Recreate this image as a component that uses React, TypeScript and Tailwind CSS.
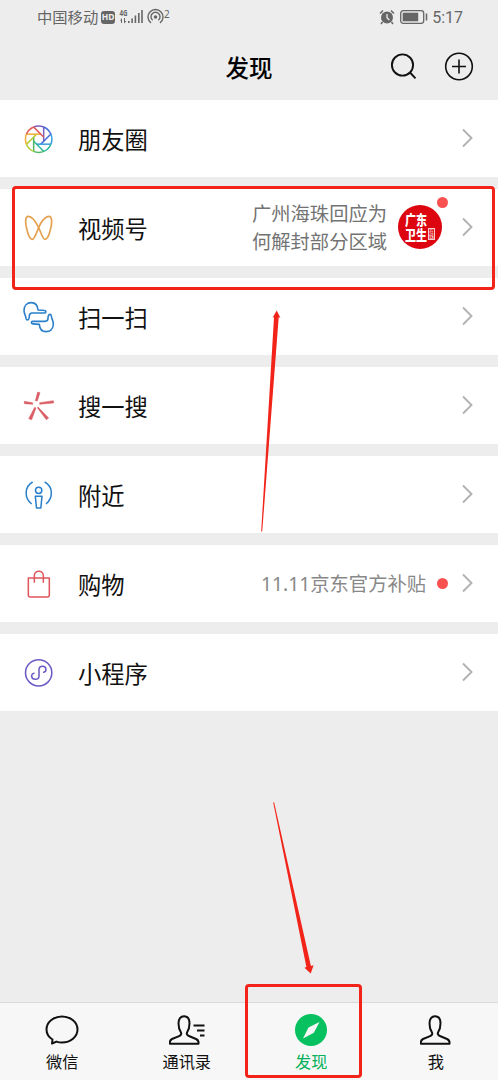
import type { ReactNode } from "react";

const APERTURE = ["#7a5fc0", "#4a6fd6", "#3a9fe0", "#2db8a0", "#4fb860", "#b5cc3a", "#eeb03a", "#e25c5c"];

function MomentsIcon() {
  return (
    <svg viewBox="0 0 108 108" className="size-9" fill="none" strokeWidth="4.600">
      {APERTURE.map((color, i) => (
        <g key={color} transform={`translate(53 54.500) rotate(${i * 45})`} stroke={color}>
          <path d="M-15.300 -36.600A39.600 39.600 0 0 1 15.300 -36.600" />
          <path d="M15 -37V7" />
        </g>
      ))}
    </svg>
  );
}

function ChannelsIcon() {
  return (
    <svg viewBox="0 0 108 108" className="size-9" fill="none" stroke="#e5a04f" strokeWidth="5" strokeLinejoin="round">
      <path d="M53 53C45 36 33 19 22 19C11 19 13 43 18 60C22 76 28 88 34 88C41 88 47 66 53 53C59 36 73 19 84 19C95 19 93 43 88 60C84 76 78 88 72 88C65 88 61 70 53 53Z" />
    </svg>
  );
}

function ScanIcon() {
  const hand = "M9 34C9 20 18 11 31 11C43 11 50 20 51 33L71 34.500a3.700 3.700 0 0 1 0 7.500L34 42C27 42 25 45 25 51C25 58 22 63 18 63C15 63 15 58 14 53C12 47 9 42 9 34Z";
  return (
    <svg viewBox="0 0 108 108" className="size-9" fill="none" stroke="#2b80cc" strokeWidth="4.800" strokeLinejoin="round">
      <path d={hand} />
      <path d={hand} transform="rotate(180 53 54.500)" />
    </svg>
  );
}

function SearchSparkIcon() {
  return (
    <svg viewBox="0 0 108 108" className="size-9" fill="#da5c64" stroke="#da5c64" strokeWidth="1.500" strokeLinejoin="round">
      <path d="M50 12L57 14L49 39L43 38Z" />
      <path d="M56 44L97 38L98 45L56 49Z" />
      <path d="M10 40L35 44.500L35 49L10 47Z" />
      <path d="M41 58L45 60L32 95L23 92Z" />
      <path d="M51 57L83 90L76 95L49 59Z" />
    </svg>
  );
}

function NearbyIcon() {
  return (
    <svg viewBox="0 0 108 108" className="size-9" fill="none" stroke="#2b80cc" strokeWidth="4.600" strokeLinejoin="round">
      <circle cx="53" cy="40" r="9.500" />
      <path d="M43 58H63L59.500 93H46.500Z" />
      <path d="M35 15C10 29 9 63 32 81M71 15C97 29 97 63 75 81" />
    </svg>
  );
}

function ShoppingIcon() {
  return (
    <svg viewBox="0 0 108 108" className="size-9" fill="none" stroke="#e0575f" strokeWidth="4.600">
      <path d="M22 36H85V87Q85 93 79 93H28Q22 93 22 87Z" strokeLinejoin="round" />
      <path d="M40 50V29C40 11 67 11 67 29V50" />
    </svg>
  );
}

function MiniProgramIcon() {
  return (
    <svg viewBox="0 0 108 108" className="size-9" fill="none" stroke="#6a5cc4" strokeWidth="4.600" strokeLinecap="round">
      <circle cx="53" cy="53.500" r="39.500" />
      <path d="M68 52C78 50 77 34 65 34C58 34 54 38 54 44V63C54 69 49 73 43 73C29 73 29 56 39 55" />
    </svg>
  );
}

function Dot() {
  return <span className="size-[11px] rounded-full bg-[#fa5151]" />;
}

function Chevron() {
  return (
    <svg viewBox="0 0 12 20" className="mb-px h-5 w-3" fill="none" stroke="#b2b2b2" strokeWidth="1.900">
      <path d="M2 1.500L10.500 10L2 18.500" />
    </svg>
  );
}

function ChannelsExtra() {
  return (
    <div className="mr-px flex items-center gap-[11px]">
      <p className="text-[19.3px] leading-7 text-[#737373]">
        广州海珠回应为
        <br />
        何解封部分区域
      </p>
      <div className="relative mb-px flex size-11 items-center justify-center gap-px rounded-full bg-[#dc0510] text-white">
        <div className="scale-y-125 text-[11px] font-black leading-[12px]">
          广东
          <br />
          卫生
        </div>
        <div className="mt-3.5 w-[7px] border border-white/80 text-center text-[5px] leading-[5px]">在线</div>
        <span className="absolute -right-[6px] -top-[8px] size-[11px] rounded-full bg-[#fa5151]" />
      </div>
    </div>
  );
}

const ROWS: { label: string; icon: ReactNode; extra?: ReactNode }[] = [
  { label: "朋友圈", icon: <MomentsIcon /> },
  { label: "视频号", icon: <ChannelsIcon />, extra: <ChannelsExtra /> },
  { label: "扫一扫", icon: <ScanIcon /> },
  { label: "搜一搜", icon: <SearchSparkIcon /> },
  { label: "附近", icon: <NearbyIcon /> },
  {
    label: "购物",
    icon: <ShoppingIcon />,
    extra: (
      <div className="-mr-[5px] flex items-center gap-[11px]">
        <span className="pt-0.5 text-[19.3px] text-[#888888]">11.11京东官方补贴</span>
        <Dot />
      </div>
    ),
  },
  { label: "小程序", icon: <MiniProgramIcon /> },
];

function StatusBar() {
  return (
    <div className="flex h-[34px] items-center justify-between pl-[37px] pr-[35px] text-[#666666]">
      <div className="flex items-center">
        <span className="w-[63px] whitespace-nowrap text-[15.3px]">中国移动</span>
        <span className="ml-px flex h-[13px] w-[14px] items-center justify-center rounded-[3px] bg-[#666666] text-[8.500px] font-bold text-[#ededed]">
          HD
        </span>
        <svg viewBox="0 0 24 18" className="ml-1 h-[18px] w-6" fill="currentColor">
          <text x="0.500" y="7.500" fontSize="8" fontWeight="700" textLength="8" lengthAdjust="spacingAndGlyphs">
            4G
          </text>
          <path d="M1 12.500L3 10V15H2V12.500ZM5 10H6V13H7.500L5 15.500ZM9 13h1.600v2H9zM12.300 10.500h1.600v4.500h-1.600zM15.600 7.500h1.600V15h-1.600zM19 5h1.600v10H19zM22.200 2h1.600v13h-1.600z" />
        </svg>
        <svg viewBox="0 0 17 18" className="ml-1 h-[18px] w-[17px]" fill="none" stroke="currentColor" strokeWidth="1.400">
          <path d="M4 15A7.500 7.500 0 1 1 13 15M5.700 12.300A4.500 4.500 0 1 1 11.300 12.300" />
          <circle cx="8.500" cy="9" r="1.800" fill="currentColor" stroke="none" />
        </svg>
        <span className="mb-1.5 text-[10px] leading-none">2</span>
      </div>
      <div className="flex items-center">
        <svg viewBox="0 0 16 16" className="size-4" fill="currentColor">
          <circle cx="8" cy="8.500" r="6" />
          <path d="M8 5V8.700L10.300 11" fill="none" stroke="#ededed" strokeWidth="1.300" />
          <path d="M1 4.500L4 1.500M15 4.500L12 1.500M3.500 13L2 15M12.500 13L14 15" stroke="currentColor" strokeWidth="1.500" />
        </svg>
        <svg viewBox="0 0 28 14" className="ml-[5px] h-[14px] w-7" fill="none" stroke="currentColor">
          <rect x="0.700" y="0.700" width="23" height="12.600" rx="2.500" strokeWidth="1.300" />
          <rect x="2.700" y="2.700" width="15.500" height="8.600" fill="currentColor" stroke="none" />
          <path d="M26.500 3.500v7" strokeWidth="1.500" />
        </svg>
        <span className="ml-1 pt-px font-[Roboto,sans-serif] text-[16px]">5:17</span>
      </div>
    </div>
  );
}

function Header() {
  return (
    <header className="relative flex h-[66px] items-center justify-center text-black">
      <h1 className="pt-1 text-[23.5px] font-medium">发现</h1>
      <div className="absolute right-6 top-[17px] flex items-center gap-[26px]">
        <svg viewBox="0 0 28 30" className="h-[30px] w-7" fill="none" stroke="#111" strokeWidth="1.900">
          <circle cx="12.500" cy="14" r="10.600" />
          <path d="M20 21.500L25.500 27.300" />
        </svg>
        <svg viewBox="0 0 30 30" className="size-[30px]" fill="none" stroke="#111" strokeWidth="1.600">
          <circle cx="15" cy="15.500" r="13.300" />
          <path d="M8 15.500H22M15 8.500V22.500" />
        </svg>
      </div>
    </header>
  );
}

const PERSON =
  "M12 17.500C10.300 15 9.500 11.500 9.500 8.500C9.500 4 11.600 1.300 15 1.300C18.400 1.300 20.500 4 20.500 8.500C20.500 11.500 19.700 15 18 17.500C17.200 19.500 18.500 20.500 20.500 21.300L27 24C29.300 25 29.800 26.500 29.500 28.700H0.800C0.500 26.500 1 25 3 24L9.500 21.300C11.500 20.500 12.800 19.500 12 17.500Z";

const TABS: { label: string; active?: boolean; icon: ReactNode }[] = [
  {
    label: "微信",
    icon: (
      <svg viewBox="0 0 34 30" className="h-[30px] w-[34px]" fill="none" stroke="#111" strokeWidth="2" strokeLinejoin="round">
        <path d="M7.500 24.500C3.500 22 1.500 18.500 1.500 14.500C1.500 7.200 8.400 1.500 17 1.500S32.500 7.200 32.500 14.500S25.600 27.500 17 27.500C15 27.500 13.200 27.200 11.500 26.600L7 28.500Z" />
      </svg>
    ),
  },
  {
    label: "通讯录",
    icon: (
      <svg viewBox="0 0 36 30" className="h-[30px] w-9" fill="none" stroke="#111" strokeWidth="2" strokeLinejoin="round">
        <path d={PERSON} />
        <path d="M24.500 10.500H35.500M28 15.500H35.500M31 20.500H35.500" />
      </svg>
    ),
  },
  {
    label: "发现",
    active: true,
    icon: (
      <svg viewBox="0 0 32 32" className="size-8">
        <circle cx="16" cy="16" r="16" fill="#07c160" />
        <path d="M24.500 8L18.800 18.800L8 24.500L13.500 13.500Z" fill="#f7f7f7" />
      </svg>
    ),
  },
  {
    label: "我",
    icon: (
      <svg viewBox="0 0 31 30" className="h-[30px] w-[31px]" fill="none" stroke="#111" strokeWidth="2" strokeLinejoin="round">
        <path d={PERSON} />
      </svg>
    ),
  },
];

function TabBar() {
  return (
    <nav className="grid h-[78px] grid-cols-4 border-t border-[#dadada] bg-[#f7f7f7]">
      {TABS.map((tab) => (
        <div key={tab.label} className="flex flex-col items-center pt-[11px]">
          <div className="flex h-8 items-center">{tab.icon}</div>
          <span className={tab.active ? "mt-1 text-[16.2px] text-[#07b05a]" : "mt-1 text-[16.2px] text-[#111]"}>
            {tab.label}
          </span>
        </div>
      ))}
    </nav>
  );
}

function Annotations() {
  return (
    <>
      <div className="absolute left-3 top-[186px] h-[104px] w-[483px] rounded-[4px] border-3 border-[#f22318]" />
      <div className="absolute left-[245px] top-[984px] h-[94px] w-[117px] rounded-[4px] border-3 border-[#f22318]" />
      <svg viewBox="0 0 498 1080" className="pointer-events-none absolute inset-0 h-[1080px] w-[498px]" fill="#f22318">
        <path d="M276.700 310.500L280.400 317.700L278.700 317.300L262.200 531.500H261.200L274 317.300L272.600 317.700Z" />
        <path d="M273.200 802.500L274.100 802.300L310.900 966L313.600 965.300L310.700 973.500L304.500 967.700L306.400 967Z" />
      </svg>
    </>
  );
}

export default function App() {
  return (
    <div className="relative flex h-[1080px] w-[498px] flex-col overflow-hidden bg-[#ededed] font-['Noto_Sans','Noto_Sans_CJK_SC',sans-serif]">
      <StatusBar />
      <Header />
      <main className="flex flex-1 flex-col gap-3">
        {ROWS.map((row) => (
          <div key={row.label} className="flex h-[77px] items-center bg-white pl-[21px] pr-[25px]">
            {row.icon}
            <span className="ml-[21px] flex-1 pt-[3px] text-[23.3px] text-[#111]">{row.label}</span>
            {row.extra}
            <div className="ml-[18px]">
              <Chevron />
            </div>
          </div>
        ))}
      </main>
      <TabBar />
      <Annotations />
    </div>
  );
}
